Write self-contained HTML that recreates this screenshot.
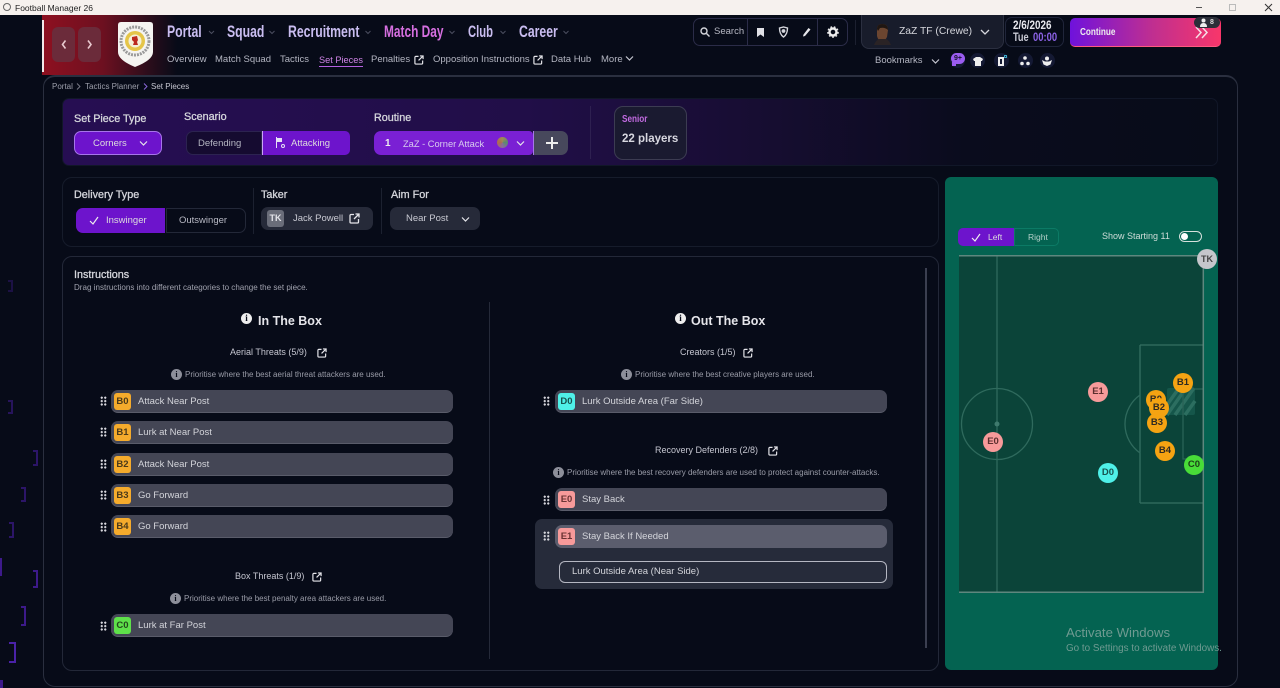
<!DOCTYPE html>
<html lang="en"><head><meta charset="utf-8"><title>Football Manager 26</title>
<style>
*{box-sizing:border-box}
html,body{margin:0;padding:0;width:1280px;height:688px;overflow:hidden;background:#070b18;font-family:"Liberation Sans",sans-serif;color:#d5d6dc}
body{position:relative}
.a{position:absolute}
.t{position:absolute;white-space:nowrap;line-height:14px;margin-top:1px}
.h{position:absolute;white-space:nowrap;line-height:14px;margin-top:1px;font-size:10.8px;color:#d5d6dc;-webkit-text-stroke:.3px #d5d6dc}
.n{position:absolute;white-space:nowrap;font-weight:700;transform-origin:0 50%;transform:scaleX(.72)}
.box{position:absolute;border-radius:6px}
.row{position:absolute;left:0;height:23px;background:#444655;border-radius:7px;border-bottom:1px solid #5a5c6a}
.bd{position:absolute;left:3px;top:3px;width:17px;height:17px;border-radius:3px;font-size:9.5px;font-weight:700;color:#4b3a1a;text-align:center;line-height:17px;background:#f5ab2c}
.lb{position:absolute;left:27px;top:5px;font-size:9.5px;color:#d3d4da;white-space:nowrap;line-height:14px}
.g{position:absolute;width:7px;height:10px;background-image:radial-gradient(circle,#d8d8de 1px,transparent 1.2px);background-size:3.5px 3.4px}
.p{position:absolute;width:20px;height:20px;border-radius:50%;font-size:9.5px;font-weight:700;color:#2e2a22;text-align:center;line-height:20px;background:#f5a312}
.ext{position:absolute;fill:none;stroke:#e5e5ea;stroke-width:1.3}
.i{position:absolute;border-radius:50%;background:#8d8f9a;color:#070b18;font-size:8px;font-weight:700;text-align:center;font-family:"Liberation Serif",serif}
.br{position:absolute;border:2px solid #3d1a8a;border-left:0;width:5px}
</style></head><body>

<!-- title bar -->
<div class="a" style="left:0;top:0;width:1280px;height:15px;background:#f6f1ee"></div>
<div class="a" style="left:3px;top:3px;width:8px;height:8px;border-radius:50%;border:1px solid #666"></div>
<div class="t" style="left:15px;top:0;font-size:8.5px;color:#222">Football Manager 26</div>
<div class="a" style="left:1196px;top:7px;width:6px;height:1px;background:#555"></div>
<div class="a" style="left:1229px;top:4px;width:7px;height:7px;border:1px solid #bbb"></div>
<svg class="a" style="left:1264px;top:3px" width="9" height="9" fill="none" stroke="#333" stroke-width="1"><path d="M1 1l7 7M8 1l-7 7"/></svg>

<!-- left background brackets -->
<div class="br" style="left:8px;top:280px;height:12px;opacity:.4"></div>
<div class="br" style="left:8px;top:400px;height:14px;opacity:.6"></div>
<div class="br" style="left:33px;top:450px;height:16px;opacity:.7"></div>
<div class="br" style="left:21px;top:487px;height:15px;opacity:.7"></div>
<div class="br" style="left:9px;top:522px;height:16px;opacity:.7"></div>
<div class="br" style="left:33px;top:570px;height:18px"></div>
<div class="br" style="left:21px;top:606px;height:20px"></div>
<div class="br" style="left:9px;top:642px;height:21px;width:7px;border-color:#4a22a8"></div>
<div class="a" style="left:0;top:558px;width:2px;height:18px;background:#3d1a8a"></div>
<div class="a" style="left:0;top:680px;width:3px;height:8px;background:#3d1a8a"></div>

<!-- header -->
<div class="a" style="left:42px;top:15px;width:135px;height:60px;background:linear-gradient(90deg,#8e1020 0,#6d1020 45%,#2a0d1b 80%,#070b18 100%)"></div>
<div class="a" style="left:42px;top:20px;width:2px;height:52px;background:#f2e9e9"></div>
<div class="a" style="left:52px;top:27px;width:23px;height:35px;border-radius:6px;background:#6b2b3a"></div>
<div class="a" style="left:78px;top:27px;width:23px;height:35px;border-radius:6px;background:#6b2b3a"></div>
<svg class="a" style="left:52px;top:27px" width="49" height="35" fill="none" stroke="#e8c9cf" stroke-width="1.6"><path d="M13.5 13.5l-3 4 3 4M36 13.5l3 4-3 4"/></svg>
<svg class="a" style="left:117px;top:21px" width="37" height="47" viewBox="0 0 37 47"><path d="M4 1h29q3 0 3 3v27q0 8-18 15Q1 39 1 31V4q0-3 3-3z" fill="#f5f4f1"/><circle cx="18" cy="20" r="14" fill="none" stroke="#9a9a9a" stroke-width="3" stroke-dasharray="2 1"/><circle cx="18" cy="20" r="10" fill="#e5c548"/><circle cx="18" cy="20" r="6.5" fill="#f4efd8"/><path d="M15 16l5-1 1 4-1 2 1 3h-5l1-3-2-2z" fill="#bb2a1f"/></svg>

<div class="n" style="left:167px;top:22px;font-size:17px;line-height:20px;color:#c9bdf0">Portal</div>
<div class="n" style="left:227px;top:22px;font-size:17px;line-height:20px;color:#c9bdf0">Squad</div>
<div class="n" style="left:288px;top:22px;font-size:17px;line-height:20px;color:#c9bdf0">Recruitment</div>
<div class="n" style="left:384px;top:22px;font-size:17px;line-height:20px;color:#d66fe0;transform:scaleX(.7)">Match Day</div>
<div class="n" style="left:468px;top:22px;font-size:17px;line-height:20px;color:#c9bdf0;transform:scaleX(.66)">Club</div>
<div class="n" style="left:519px;top:22px;font-size:17px;line-height:20px;color:#c9bdf0">Career</div>
<svg class="a" style="left:200px;top:29px" width="370" height="8" fill="none" stroke="#4a4d5e" stroke-width="1"><path d="M9 2l2.500 2.500L14 2M69.500 2L72 4.500 74.500 2M165.500 2l2.500 2.500L170.500 2M249.500 2l2.500 2.500L254.500 2M300.500 2l2.500 2.500L305.500 2M363.500 2l2.500 2.500L368.500 2"/></svg>

<div class="t" style="left:167px;top:52px;font-size:9.5px;color:#b4b6c2">Overview</div>
<div class="t" style="left:215px;top:52px;font-size:9.5px;color:#b4b6c2">Match Squad</div>
<div class="t" style="left:280px;top:52px;font-size:9.5px;color:#b4b6c2">Tactics</div>
<div class="t" style="left:319px;top:52px;font-size:9.2px;color:#d084e6">Set Pieces</div>
<div class="a" style="left:319px;top:66px;width:44px;height:1px;background:#b45fe0"></div>
<div class="t" style="left:371px;top:52px;font-size:9.5px;color:#b4b6c2">Penalties</div>
<svg class="ext" style="left:414px;top:55px" width="10" height="10" viewBox="0 0 11 11"><path d="M5 1.500H2a1 1 0 0 0-1 1V9a1 1 0 0 0 1 1h6.500a1 1 0 0 0 1-1V6M5 6l5-5M6.500 1H10v3.500"/></svg>
<div class="t" style="left:433px;top:52px;font-size:9.5px;color:#b4b6c2">Opposition Instructions</div>
<svg class="ext" style="left:533px;top:55px" width="10" height="10" viewBox="0 0 11 11"><path d="M5 1.500H2a1 1 0 0 0-1 1V9a1 1 0 0 0 1 1h6.500a1 1 0 0 0 1-1V6M5 6l5-5M6.500 1H10v3.500"/></svg>
<div class="t" style="left:551px;top:52px;font-size:9.5px;color:#b4b6c2">Data Hub</div>
<div class="t" style="left:601px;top:52px;font-size:9.5px;color:#b4b6c2">More</div>
<svg class="a" style="left:625px;top:55px" width="9" height="7" fill="none" stroke="#c5c6d0" stroke-width="1.200"><path d="M1 1.500l3.500 3.500L8 1.500"/></svg>

<!-- search cluster -->
<div class="box" style="left:693px;top:18px;width:155px;height:28px;border:1px solid #2b2c48;border-radius:7px"></div>
<div class="a" style="left:747px;top:19px;width:1px;height:26px;background:#2b2c48"></div>
<div class="a" style="left:817px;top:19px;width:1px;height:26px;background:#2b2c48"></div>
<svg class="a" style="left:700px;top:27px" width="10" height="10" fill="none" stroke="#d5d6dc" stroke-width="1.400"><circle cx="4" cy="4" r="3"/><path d="M6.500 6.500L9.500 9.500"/></svg>
<div class="t" style="left:714px;top:24px;font-size:9.5px;color:#b8b9c4">Search</div>
<svg class="a" style="left:756px;top:27px" width="10" height="10"><path d="M1 1h7v9L4.500 7.500 1 10z" fill="#e0e0e6"/></svg>
<svg class="a" style="left:778px;top:26px" width="11" height="12" fill="none" stroke="#d5d6dc" stroke-width="1.400"><path d="M1.500 2l4-1 4 1c0 4-1 7-4 9-3-2-4-5-4-9z"/><circle cx="5.500" cy="5" r="1.200" fill="#d5d6dc"/></svg>
<svg class="a" style="left:802px;top:27px" width="10" height="10"><path d="M6.500 1l2 1.500L3 9 1 9.500 1.500 7.500z" fill="#e6e6ea"/></svg>
<svg class="a" style="left:827px;top:26px" width="12" height="12"><circle cx="6" cy="6" r="3.500" fill="none" stroke="#eee" stroke-width="2.400"/><circle cx="6" cy="6" r="5.200" fill="none" stroke="#eee" stroke-width="1.200" stroke-dasharray="1.800 1.800"/></svg>
<div class="a" style="left:855px;top:20px;width:1px;height:25px;background:#1c2030"></div>

<!-- manager -->
<div class="box" style="left:861px;top:15px;width:143px;height:34px;background:#181c2b;border:1px solid #2b2f40;border-top:0;border-radius:0 0 8px 8px"></div>
<svg class="a" style="left:874px;top:23px" width="17" height="22" viewBox="0 0 17 22"><path d="M3 6q0-5 5-5 6 0 6 6l-1 7q-2 4-5 4-4 0-5-5z" fill="#6b4530"/><path d="M3 6q0-5 5-5 6 0 6 6-3-3-8-2l-2 3z" fill="#1f1612"/><path d="M0 22q2-5 5-6h7q3 1 5 6z" fill="#2a2325"/></svg>
<div class="t" style="left:899px;top:24px;font-size:10.3px;color:#d5d6dc">ZaZ TF (Crewe)</div>
<svg class="a" style="left:980px;top:29px" width="10" height="7" fill="none" stroke="#d5d6dc" stroke-width="1.300"><path d="M1 1l4 4 4-4"/></svg>

<!-- date -->
<div class="box" style="left:1005px;top:17px;width:59px;height:30px;border:1px solid #20253a;border-radius:7px"></div>
<div class="n" style="left:1013px;top:20px;font-size:11.500px;line-height:13px;color:#e8e8ee;transform:scaleX(.86)">2/6/2026</div>
<div class="n" style="left:1013px;top:32px;font-size:11.500px;line-height:13px;color:#c8c9d4;transform:scaleX(.8)">Tue</div>
<div class="n" style="left:1033px;top:32px;font-size:11.500px;line-height:13px;color:#8d63e8;transform:scaleX(.82)">00:00</div>

<!-- continue -->
<div class="box" style="left:1070px;top:18px;width:151px;height:29px;border-radius:5px;background:linear-gradient(90deg,#6f12dc 0,#c02f90 55%,#f8366a 100%);border-bottom:1px solid #ff5a80"></div>
<div class="n" style="left:1080px;top:25px;font-size:10.500px;line-height:14px;color:#eee;transform:scaleX(.78)">Continue</div>
<svg class="a" style="left:1195px;top:26px" width="14" height="13" fill="none" stroke="#f6dfe6" stroke-width="1.500"><path d="M1 1l5 5.500-5 5.500M7 1l5 5.500-5 5.500"/></svg>
<div class="box" style="left:1194px;top:17px;width:26px;height:11px;background:#2b2e38;border-radius:6px"></div>
<svg class="a" style="left:1199px;top:18px" width="9" height="9"><circle cx="4.500" cy="2.500" r="2" fill="#eee"/><path d="M1 9q0-4 3.500-4T8 9z" fill="#eee"/></svg>
<div class="t" style="left:1210px;top:15px;font-size:7px;font-weight:700;color:#ddd">8</div>

<!-- bookmarks row -->
<div class="t" style="left:875px;top:53px;font-size:9.500px;color:#b4b6c2">Bookmarks</div>
<svg class="a" style="left:931px;top:58px" width="9" height="7" fill="none" stroke="#c5c6d0" stroke-width="1.200"><path d="M1 1.500l3.500 3.500L8 1.500"/></svg>
<div class="a" style="left:950px;top:53px;width:15px;height:15px;border-radius:50%;background:#141933"></div>
<div class="a" style="left:951px;top:53px;width:14px;height:11px;border-radius:6px;background:#9b5cf0;color:#17122c;font-size:7px;font-weight:700;text-align:center;line-height:11px">9+</div>
<div class="a" style="left:952px;top:62px;width:4px;height:4px;background:#9b5cf0"></div>
<div class="a" style="left:970px;top:53px;width:15px;height:15px;border-radius:50%;background:#141933"></div>
<svg class="a" style="left:973px;top:57px" width="10" height="9"><path d="M3 0h4l3 2-1 2H8v5H2V4H1L0 2z" fill="#eee"/></svg>
<div class="a" style="left:994px;top:53px;width:15px;height:15px;border-radius:50%;background:#141933"></div>
<div class="a" style="left:998px;top:57px;width:6px;height:9px;background:#eee"></div>
<div class="a" style="left:1000px;top:59px;width:2px;height:5px;background:#141933"></div>
<div class="a" style="left:1004px;top:55px;width:3px;height:3px;border:1px solid #3aa7c8"></div>
<div class="a" style="left:1018px;top:53px;width:15px;height:15px;border-radius:50%;background:#141933"></div>
<svg class="a" style="left:1020px;top:56px" width="10" height="10"><circle cx="5" cy="2" r="1.800" fill="#eee"/><circle cx="2" cy="7.500" r="1.800" fill="#eee"/><circle cx="8" cy="7.500" r="1.800" fill="#eee"/></svg>
<div class="a" style="left:1040px;top:53px;width:15px;height:15px;border-radius:50%;background:#141933"></div>
<svg class="a" style="left:1042px;top:56px" width="10" height="10"><circle cx="5" cy="2.500" r="2" fill="#eee"/><path d="M0 4l3 1.500h4L10 4 8.500 8.500 5 10 1.500 8.500z" fill="#eee"/></svg>

<!-- main panel -->
<div class="a" style="left:43px;top:75px;width:1195px;height:612px;border-style:solid;border-color:#2a2f3f;border-width:2px 1px 1px;border-radius:12px;background:#070b18"></div>
<div class="t" style="left:52px;top:79px;font-size:8px;color:#9d9fab">Portal</div>
<svg class="a" style="left:76px;top:83px" width="5" height="7" fill="none" stroke="#7c7e8a" stroke-width=".9"><path d="M1 .5l3 3-3 3"/></svg>
<div class="t" style="left:85px;top:79px;font-size:8px;color:#9d9fab">Tactics Planner</div>
<svg class="a" style="left:143px;top:83px" width="5" height="7" fill="none" stroke="#8f6be0" stroke-width=".9"><path d="M1 .5l3 3-3 3"/></svg>
<div class="t" style="left:151px;top:79px;font-size:8px;color:#c5c6d0">Set Pieces</div>

<!-- strip -->
<div class="box" style="left:62px;top:98px;width:1156px;height:68px;border:1px solid #111728;border-radius:7px;background:linear-gradient(90deg,#260e52 0,#210e48 40%,#170d32 60%,#0a0c1d 78%,#080c19 100%)"></div>
<div class="h" style="left:74px;top:111px">Set Piece Type</div>
<div class="box" style="left:74px;top:131px;width:88px;height:24px;background:#6d14cc;border:1px solid #a775ea;border-radius:7px"></div>
<div class="t" style="left:93px;top:136px;font-size:9.500px;color:#ddd">Corners</div>
<svg class="a" style="left:139px;top:140px" width="9" height="7" fill="none" stroke="#e5e5ea" stroke-width="1.200"><path d="M1 1.500l3.500 3.500L8 1.500"/></svg>
<div class="h" style="left:184px;top:109px">Scenario</div>
<div class="box" style="left:186px;top:131px;width:76px;height:24px;border:1px solid #2c2350;border-radius:7px 0 0 7px;background:#150b30"></div>
<div class="t" style="left:198px;top:136px;font-size:9.500px;color:#b5b6c2">Defending</div>
<div class="box" style="left:262px;top:131px;width:88px;height:24px;background:#6d14cc;border-radius:0 5px 5px 0;border-left:1px solid #c9a5f5"></div>
<svg class="a" style="left:275px;top:137px" width="11" height="12"><path d="M1 0h1v11H1zM2 1h5v4H2z" fill="#e5e0f5"/><circle cx="8" cy="9" r="1.500" fill="none" stroke="#e5e0f5"/></svg>
<div class="t" style="left:291px;top:136px;font-size:9.500px;color:#ddd">Attacking</div>
<div class="h" style="left:374px;top:110px">Routine</div>
<div class="box" style="left:374px;top:131px;width:159px;height:24px;background:#7a20d4;border-radius:7px 4px 4px 7px"></div>
<div class="t" style="left:385px;top:136px;font-size:10px;font-weight:700;color:#eee">1</div>
<div class="t" style="left:403px;top:136px;font-size:9.300px;color:#d8cdee">ZaZ - Corner Attack</div>
<div class="a" style="left:497px;top:137px;width:11px;height:11px;border-radius:50%;background:conic-gradient(#a08a55,#5a8a70,#8a6aa0,#b06a50,#a08a55)"></div>
<svg class="a" style="left:516px;top:140px" width="9" height="7" fill="none" stroke="#e5e5ea" stroke-width="1.200"><path d="M1 1.500l3.500 3.500L8 1.500"/></svg>
<div class="box" style="left:533px;top:131px;width:35px;height:24px;background:#47485c;border-radius:0 7px 7px 0;border-left:1px solid #a775ea"></div>
<div class="a" style="left:546px;top:142px;width:12px;height:2px;background:#eee"></div>
<div class="a" style="left:551px;top:137px;width:2px;height:12px;background:#eee"></div>
<div class="a" style="left:590px;top:106px;width:1px;height:53px;background:#2e2050"></div>
<div class="box" style="left:614px;top:106px;width:73px;height:54px;background:#1a1a30;border:1px solid #3c3c52;border-radius:9px"></div>
<div class="n" style="left:622px;top:112px;font-size:10.500px;line-height:14px;color:#c16ae0;transform:scaleX(.78)">Senior</div>
<div class="t" style="left:622px;top:131px;font-size:11.500px;font-weight:700;color:#d8d8e0">22 players</div>

<!-- delivery -->
<div class="box" style="left:62px;top:177px;width:877px;height:70px;border:1px solid #161c2b;border-radius:10px"></div>
<div class="h" style="left:74px;top:187px">Delivery Type</div>
<div class="box" style="left:76px;top:208px;width:89px;height:25px;background:#6d14cc;border-radius:7px 0 0 7px"></div>
<svg class="a" style="left:89px;top:216px" width="10" height="9" fill="none" stroke="#eee" stroke-width="1.200"><path d="M1 5l3 3 5-7"/></svg>
<div class="t" style="left:106px;top:213px;font-size:9.500px;color:#ddd">Inswinger</div>
<div class="box" style="left:166px;top:208px;width:80px;height:25px;border:1px solid #232838;border-radius:0 7px 7px 0"></div>
<div class="t" style="left:179px;top:213px;font-size:9.500px;color:#b8b9c4">Outswinger</div>
<div class="a" style="left:253px;top:188px;width:1px;height:46px;background:#1c2130"></div>
<div class="h" style="left:261px;top:187px">Taker</div>
<div class="box" style="left:261px;top:207px;width:112px;height:23px;background:#262a39;border-radius:7px"></div>
<div class="box" style="left:267px;top:210px;width:17px;height:17px;background:#6a6d79;border-radius:3px;font-size:9px;font-weight:700;color:#e5e5ea;text-align:center;line-height:17px">TK</div>
<div class="t" style="left:293px;top:211px;font-size:9.500px;color:#c8c9d2">Jack Powell</div>
<svg class="ext" style="left:349px;top:213px" width="11" height="11" viewBox="0 0 11 11"><path d="M5 1.500H2a1 1 0 0 0-1 1V9a1 1 0 0 0 1 1h6.500a1 1 0 0 0 1-1V6M5 6l5-5M6.500 1H10v3.500"/></svg>
<div class="a" style="left:381px;top:188px;width:1px;height:46px;background:#1c2130"></div>
<div class="h" style="left:391px;top:187px">Aim For</div>
<div class="box" style="left:390px;top:207px;width:90px;height:23px;background:#262a39;border-radius:7px"></div>
<div class="t" style="left:406px;top:211px;font-size:9.500px;color:#c8c9d2">Near Post</div>
<svg class="a" style="left:461px;top:216px" width="9" height="7" fill="none" stroke="#e5e5ea" stroke-width="1.200"><path d="M1 1.500l3.500 3.500L8 1.500"/></svg>

<!-- instructions -->
<div class="box" style="left:62px;top:256px;width:877px;height:415px;border:1px solid #232838;border-radius:10px"></div>
<div class="h" style="left:74px;top:267px">Instructions</div>
<div class="t" style="left:74px;top:280px;font-size:8.050px;color:#a0a2ae">Drag instructions into different categories to change the set piece.</div>
<div class="a" style="left:925px;top:268px;width:2px;height:380px;background:#3b3f50"></div>
<div class="a" style="left:489px;top:302px;width:1px;height:357px;background:#252a39"></div>

<!-- left column -->
<div class="a" style="left:241px;top:313px;width:11px;height:11px;border-radius:50%;background:#eee;color:#070b18;font:700 9px/11px 'Liberation Serif',serif;text-align:center">i</div>
<div class="t" style="left:258px;top:313px;font-size:12.500px;font-weight:700;color:#e5e5ea">In The Box</div>
<div class="t" style="left:230px;top:344px;font-size:9px;color:#c5c6d0">Aerial Threats (5/9)</div>
<svg class="ext" style="left:317px;top:348px" width="10" height="10" viewBox="0 0 11 11"><path d="M5 1.500H2a1 1 0 0 0-1 1V9a1 1 0 0 0 1 1h6.500a1 1 0 0 0 1-1V6M5 6l5-5M6.500 1H10v3.500"/></svg>
<div class="i" style="left:171px;top:369px;width:11px;height:11px;line-height:11px">i</div>
<div class="t" style="left:185px;top:367px;font-size:8px;color:#9a9ca8">Prioritise where the best aerial threat attackers are used.</div>

<div class="g" style="left:100px;top:396px"></div>
<div class="row" style="left:111px;top:390px;width:342px"><span class="bd">B0</span><span class="lb">Attack Near Post</span></div>
<div class="g" style="left:100px;top:427px"></div>
<div class="row" style="left:111px;top:421px;width:342px"><span class="bd">B1</span><span class="lb">Lurk at Near Post</span></div>
<div class="g" style="left:100px;top:459px"></div>
<div class="row" style="left:111px;top:453px;width:342px"><span class="bd">B2</span><span class="lb">Attack Near Post</span></div>
<div class="g" style="left:100px;top:490px"></div>
<div class="row" style="left:111px;top:484px;width:342px"><span class="bd">B3</span><span class="lb">Go Forward</span></div>
<div class="g" style="left:100px;top:522px"></div>
<div class="row" style="left:111px;top:515px;width:342px"><span class="bd">B4</span><span class="lb">Go Forward</span></div>

<div class="t" style="left:235px;top:568px;font-size:9px;color:#c5c6d0">Box Threats (1/9)</div>
<svg class="ext" style="left:312px;top:572px" width="10" height="10" viewBox="0 0 11 11"><path d="M5 1.500H2a1 1 0 0 0-1 1V9a1 1 0 0 0 1 1h6.500a1 1 0 0 0 1-1V6M5 6l5-5M6.500 1H10v3.500"/></svg>
<div class="i" style="left:170px;top:593px;width:11px;height:11px;line-height:11px">i</div>
<div class="t" style="left:184px;top:591px;font-size:8px;color:#9a9ca8">Prioritise where the best penalty area attackers are used.</div>
<div class="g" style="left:100px;top:621px"></div>
<div class="row" style="left:111px;top:614px;width:342px"><span class="bd" style="background:#5ee04a;color:#23471c">C0</span><span class="lb">Lurk at Far Post</span></div>

<!-- right column -->
<div class="a" style="left:675px;top:313px;width:11px;height:11px;border-radius:50%;background:#eee;color:#070b18;font:700 9px/11px 'Liberation Serif',serif;text-align:center">i</div>
<div class="t" style="left:691px;top:313px;font-size:12.500px;font-weight:700;color:#e5e5ea">Out The Box</div>
<div class="t" style="left:680px;top:344px;font-size:9px;color:#c5c6d0">Creators (1/5)</div>
<svg class="ext" style="left:743px;top:348px" width="10" height="10" viewBox="0 0 11 11"><path d="M5 1.500H2a1 1 0 0 0-1 1V9a1 1 0 0 0 1 1h6.500a1 1 0 0 0 1-1V6M5 6l5-5M6.500 1H10v3.500"/></svg>
<div class="i" style="left:621px;top:369px;width:11px;height:11px;line-height:11px">i</div>
<div class="t" style="left:635px;top:367px;font-size:8px;color:#9a9ca8">Prioritise where the best creative players are used.</div>
<div class="g" style="left:543px;top:396px"></div>
<div class="row" style="left:555px;top:390px;width:332px"><span class="bd" style="background:#4ff0e8;color:#17524f">D0</span><span class="lb">Lurk Outside Area (Far Side)</span></div>

<div class="t" style="left:655px;top:442px;font-size:9px;color:#c5c6d0">Recovery Defenders (2/8)</div>
<svg class="ext" style="left:768px;top:446px" width="10" height="10" viewBox="0 0 11 11"><path d="M5 1.500H2a1 1 0 0 0-1 1V9a1 1 0 0 0 1 1h6.500a1 1 0 0 0 1-1V6M5 6l5-5M6.500 1H10v3.500"/></svg>
<div class="i" style="left:553px;top:467px;width:11px;height:11px;line-height:11px">i</div>
<div class="t" style="left:567px;top:465px;font-size:8px;color:#9a9ca8">Prioritise where the best recovery defenders are used to protect against counter-attacks.</div>
<div class="g" style="left:543px;top:495px"></div>
<div class="row" style="left:555px;top:488px;width:332px"><span class="bd" style="background:#f79a9a;color:#6b3434">E0</span><span class="lb">Stay Back</span></div>

<div class="box" style="left:535px;top:519px;width:358px;height:70px;background:#262b3a;border-radius:7px"></div>
<div class="g" style="left:543px;top:531px"></div>
<div class="row" style="left:555px;top:525px;width:332px;background:#5b5d6d;border-bottom:0"><span class="bd" style="background:#f79a9a;color:#6b3434">E1</span><span class="lb">Stay Back If Needed</span></div>
<div class="box" style="left:559px;top:561px;width:328px;height:22px;border:1.500px solid #b5b7c2;border-radius:6px"></div>
<div class="t" style="left:572px;top:564px;font-size:9.500px;color:#d3d4da">Lurk Outside Area (Near Side)</div>

<!-- pitch panel -->
<div class="box" style="left:945px;top:177px;width:273px;height:493px;background:#046351;border-radius:6px"></div>
<div class="box" style="left:958px;top:228px;width:56px;height:18px;background:#6d14cc;border-radius:5px 0 0 5px"></div>
<svg class="a" style="left:971px;top:233px" width="10" height="9" fill="none" stroke="#eee" stroke-width="1.200"><path d="M1 5l3 3 5-7"/></svg>
<div class="t" style="left:988px;top:229px;font-size:8.500px;color:#ddd">Left</div>
<div class="box" style="left:1014px;top:228px;width:45px;height:18px;border:1px solid #0c7a65;border-radius:0 5px 5px 0"></div>
<div class="t" style="left:1028px;top:229px;font-size:8.500px;color:#b5d0ca">Right</div>
<div class="t" style="left:1102px;top:228px;font-size:9px;color:#cfdcd8">Show Starting 11</div>
<div class="box" style="left:1179px;top:231px;width:23px;height:11px;border:1px solid #d5e0dc;border-radius:6px"></div>
<div class="a" style="left:1181px;top:233px;width:7px;height:7px;border-radius:50%;background:#fff"></div>

<svg class="a" style="left:959px;top:255px" width="246" height="340" viewBox="0 0 246 340">
<rect x="0" y="0" width="245" height="338" fill="#0b4439"/>
<rect x="208" y="133" width="28" height="27" rx="2" fill="#15564a"/>
<path d="M208 150l12-17M208 160l19-27M216 160l19-27M226 160l10-14" stroke="#2c6e60" stroke-width="3.500" fill="none"/>
<g fill="none" stroke="#2f6a5d" stroke-width="1.300">
<circle cx="38" cy="169" r="35.500"/>
<path d="M38 0V338"/>
<path d="M181 90H244M181 248H244M181 90V248" stroke="#356f62"/>
<path d="M181 140A35.500 35.500 0 0 0 181 198"/>
<path d="M244 134H224V204H244" stroke="#2a6356"/>
</g>
<path d="M0 0.700H245M244.300 0V338M0 337.300H245" fill="none" stroke="#5e877e" stroke-width="1.500"/>
<circle cx="38" cy="169" r="2.500" fill="#3f7a6d"/>
</svg>
<div class="p" style="left:1197px;top:249px;background:#c5c6cb;color:#444;font-size:9px">TK</div>
<div class="p" style="left:1173px;top:373px">B1</div>
<div class="p" style="left:1146px;top:390px">B0</div>
<div class="p" style="left:1149px;top:398px">B2</div>
<div class="p" style="left:1147px;top:413px">B3</div>
<div class="p" style="left:1155px;top:441px">B4</div>
<div class="p" style="left:1184px;top:455px;background:#48dc38;color:#1c3d18">C0</div>
<div class="p" style="left:1098px;top:463px;background:#4ff0e8;color:#17524f">D0</div>
<div class="p" style="left:1088px;top:382px;background:#f79a9a;color:#5b2e2e">E1</div>
<div class="p" style="left:983px;top:432px;background:#f79a9a;color:#5b2e2e">E0</div>

<div class="t" style="left:1066px;top:623px;font-size:13.200px;line-height:18px;color:#6f9a91">Activate Windows</div>
<div class="t" style="left:1066px;top:641px;font-size:9.900px;color:#6f9a91">Go to Settings to activate Windows.</div>

</body></html>
